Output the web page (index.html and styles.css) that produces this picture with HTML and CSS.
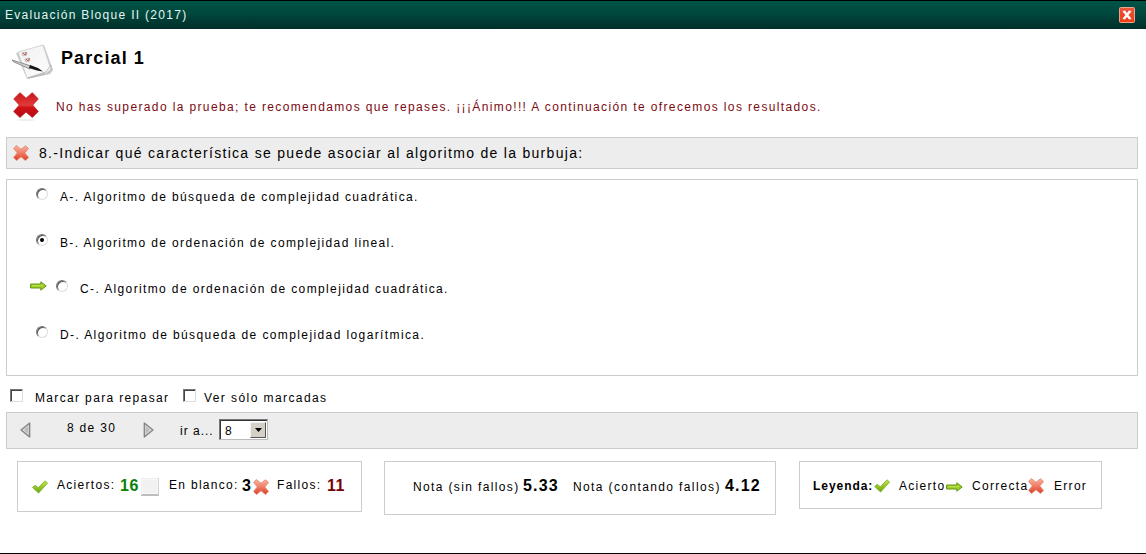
FILE: index.html
```html
<!DOCTYPE html>
<html lang="es">
<head>
<meta charset="utf-8">
<title>Evaluación Bloque II (2017)</title>
<link rel="stylesheet" href="styles.css">
</head>
<body>
<svg class="defs" width="0" height="0" aria-hidden="true">
  <defs>
    <linearGradient id="gGreen" x1="0" y1="0" x2="0" y2="1"><stop offset="0" stop-color="#c3e83c"/><stop offset="1" stop-color="#67a611"/></linearGradient>
    <linearGradient id="gRed" x1="0" y1="0" x2="0" y2="1"><stop offset="0" stop-color="#f8b3a2"/><stop offset=".45" stop-color="#f0836c"/><stop offset="1" stop-color="#dc3d24"/></linearGradient>
    <linearGradient id="gDeep" x1="0" y1="0" x2="0" y2="1"><stop offset="0" stop-color="#c9141b"/><stop offset=".5" stop-color="#e23a3a"/><stop offset=".6" stop-color="#cf1218"/><stop offset="1" stop-color="#b30b12"/></linearGradient>
    <linearGradient id="gClose" x1="0" y1="0" x2="0" y2="1"><stop offset="0" stop-color="#e8553c"/><stop offset="1" stop-color="#f03c14"/></linearGradient>
    <linearGradient id="gGray" x1="0" y1="0" x2="1" y2="0"><stop offset="0" stop-color="#d8d8d8"/><stop offset="1" stop-color="#aaa"/></linearGradient>
    <linearGradient id="gPaper" x1="0" y1="0" x2="1" y2="1"><stop offset="0" stop-color="#f1f1f1"/><stop offset="1" stop-color="#fdfdfd"/></linearGradient>
    <symbol id="cross" viewBox="0 0 16 16"><path d="M3.2 .5 8 4.200 12.6 .7 15.6 3.6 11.8 7.9 15.6 12.4 12.4 15.5 8 11.8 3.6 15.5 .5 12.4 4.300 7.900 .6 3.6Z" fill="url(#gRed)" stroke="#e4876f" stroke-width=".8"/></symbol>
    <symbol id="check" viewBox="0 0 16 14"><path d="M.6 7.6 3 5.2 6.3 7.700 13 .8 15.600 3 6.600 13.100Z" fill="url(#gGreen)" stroke="#7cae2a" stroke-width=".8"/></symbol>
    <symbol id="arrow" viewBox="0 0 17 10"><path d="M.6 3h10.2V.8L16.2 5l-5.4 4.2V7H.6Z" fill="#9bcf20" stroke="#669317" stroke-width="1"/><path d="M2 4.7h11" stroke="#c5e868" stroke-width=".8"/></symbol>
    <symbol id="prev" viewBox="0 0 11 16"><path d="M9.7 1v14L1 8Z" fill="url(#gGray)" stroke="#858585" stroke-width="1.3" stroke-linejoin="round"/><path d="M8.4 3.6v8.8L3 8Z" fill="none" stroke="#dedede" stroke-width=".8"/></symbol>
  </defs>
</svg>
<div class="window">
  <header class="titlebar">
    <span class="caption">Evaluación Bloque II (2017)</span>
    <svg class="close" viewBox="0 0 16 16"><rect x=".5" y=".5" width="15" height="15" rx="1" fill="url(#gClose)" stroke="#e9a58f"/><path d="M5 4.2 11 11.8M11 4.2 5 11.8" stroke="#fff" stroke-width="2.4"/><path d="M3.7 4.3h2.6M9.7 4.3h2.6M3.7 11.7h2.6M9.7 11.7h2.6" stroke="#fff" stroke-width="1"/></svg>
  </header>
  <main>
    <div class="heading">
      <svg class="paper" viewBox="0 0 42 36"><path d="M5 9 33 1l9 25-3 4-23 5Z" fill="#c9c9c9"/><path d="M7 8 32 1l8 25-24 8Z" fill="url(#gPaper)" stroke="#ccc" stroke-width=".8"/><path d="m34 29 6-8v5l-5 4-18 4Z" fill="#eee" stroke="#aaa" stroke-width=".7"/><path d="m11 9 4-1 1 3-4 1ZM14 15l4-1 1 3-4 1Z" fill="#f6dcdc" stroke="#aaa" stroke-width=".7"/><path d="m12 9 2 2 1.500-3M15 15l2 2 1.500-3" fill="none" stroke="#bf444c" stroke-width=".9"/><path d="m1 16 19 6-1 3L3 18Z" fill="#d6d6d6" stroke="#777" stroke-width=".8"/><path d="m19 21 8 3 5 3.500-6-1-8-2.500Z" fill="#151515"/></svg>
      <h1>Parcial 1</h1>
    </div>
    <div class="message">
      <svg class="fail" viewBox="0 0 26 30"><ellipse cx="13" cy="28" rx="9" ry="1" fill="#eee"/><path d="M7 .7 13 6.200 19.300 .7l6 6.200-5.600 6.200 5.600 6.400-6 6L13 20 7 25.500.7 19.500l5.600-6.400-5.600-6.200Z" fill="url(#gDeep)" stroke="#bf1d22" stroke-width=".8"/></svg>
      <p>No has superado la prueba; te recomendamos que repases. ¡¡¡Ánimo!!! A continuación te ofrecemos los resultados.</p>
    </div>
    <div class="question">
      <svg class="i-cross"><use href="#cross"/></svg>
      <span>8.-Indicar qué característica se puede asociar al algoritmo de la burbuja:</span>
    </div>
    <ul class="answers">
      <li><i class="radio"></i><span class="a">A-. Algoritmo de búsqueda de complejidad cuadrática.</span></li>
      <li><i class="radio on"></i><span class="b">B-. Algoritmo de ordenación de complejidad lineal.</span></li>
      <li class="right"><svg class="i-arrow"><use href="#arrow"/></svg><i class="radio"></i><span class="c">C-. Algoritmo de ordenación de complejidad cuadrática.</span></li>
      <li><i class="radio"></i><span class="d">D-. Algoritmo de búsqueda de complejidad logarítmica.</span></li>
    </ul>
    <div class="marks">
      <i class="box"></i><span class="m1">Marcar para repasar</span>
      <i class="box"></i><span class="m2">Ver sólo marcadas</span>
    </div>
    <nav class="pager">
      <svg class="i-nav"><use href="#prev"/></svg>
      <span class="count">8 de 30</span>
      <svg class="i-nav flip"><use href="#prev"/></svg>
      <span class="goto">ir a...</span>
      <div class="select"><span>8</span><b><svg viewBox="0 0 7 4"><path d="M0 0h7L3.500 4Z"/></svg></b></div>
    </nav>
    <div class="summary">
      <section class="panel totals">
        <svg class="i-check"><use href="#check"/></svg><span class="t1">Aciertos:</span><strong class="n1 good">16</strong>
        <i class="blank"></i><span class="t2">En blanco:</span><strong class="n2">3</strong>
        <svg class="i-cross"><use href="#cross"/></svg><span class="t3">Fallos:</span><strong class="n3 bad">11</strong>
      </section>
      <section class="panel grades">
        <span class="g1">Nota (sin fallos)</span><strong class="v1">5.33</strong>
        <span class="g2">Nota (contando fallos)</span><strong class="v2">4.12</strong>
      </section>
      <section class="panel legend">
        <b class="l0">Leyenda:</b><svg class="i-check"><use href="#check"/></svg><span class="l1">Acierto</span>
        <svg class="i-arrow"><use href="#arrow"/></svg><span class="l2">Correcta</span>
        <svg class="i-cross"><use href="#cross"/></svg><span class="l3">Error</span>
      </section>
    </div>
  </main>
</div>
</body>
</html>
```
FILE: styles.css
```css
* { box-sizing: border-box; }
body { margin: 0; background: #fff; color: #000; font: 12px/16px "Liberation Sans", Arial, sans-serif; letter-spacing: 1.3px; white-space: nowrap; }
h1, p, ul { margin: 0; padding: 0; }
svg, i { display: block; flex: none; }
.defs { position: absolute; }
.window { height: 554px; border-bottom: 1px solid #000; overflow: hidden; }
.titlebar { height: 29px; border-top: 1px solid #000; background: linear-gradient(#005447, #00493f 40%, #002e29); color: #e6f5f0; display: flex; justify-content: space-between; padding: 6px 11px 0 5px; }
.close { width: 16px; height: 16px; }
main { padding: 0 8px 0 6px; }
.heading { height: 53px; display: flex; padding: 15px 0 0 5px; gap: 8px; }
.paper { width: 42px; height: 36px; }
h1 { font-size: 18px; line-height: 20px; padding-top: 4px; letter-spacing: 1.1px; }
.message { height: 55px; display: flex; padding: 10px 0 0 7px; gap: 17px; color: #7c0a12; }
.fail { width: 26px; height: 30px; }
.message p { padding-top: 7px; letter-spacing: 1.37px; }
.question { height: 32px; border: 1px solid #ccc; background: #ededed; display: flex; align-items: center; padding-left: 6px; gap: 10px; font-size: 14px; letter-spacing: 1.3px; }
.i-cross { width: 16px; height: 16px; }
.i-check { width: 16px; height: 14px; }
.i-arrow { width: 17px; height: 10px; }
.answers { list-style: none; height: 197px; margin-top: 10px; border: 1px solid #ccc; padding: 8px 0 0 29px; }
.answers li { height: 46px; display: flex; }
.answers li span { margin: 1px 0 0 12px; letter-spacing: 1.37px; }
.answers li .d { letter-spacing: 1.39px; }
.answers .right { padding-left: 0; margin-left: -7px; }
.right .i-arrow { margin: 1px 9px 0 1px; }
.radio { width: 12px; height: 12px; border-radius: 50%; border: 1px solid; border-color: #777 #ddd #ddd #777; box-shadow: inset 1px 1px 0 #555; display: grid; place-items: center; }
.radio.on::after { content: ""; width: 4px; height: 4px; border-radius: 50%; background: #000; }
.marks { height: 36px; display: flex; padding: 13px 0 0 4px; }
.box { width: 13px; height: 13px; border: 1px solid; border-color: #777 #ddd #ddd #777; box-shadow: inset 1px 1px 0 #444; background: #fff; }
.m1 { margin: 1px 0 0 12px; width: 148px; letter-spacing: 1.35px; }
.m2 { margin: 1px 0 0 8px; letter-spacing: 1.42px; }
.pager { height: 37px; border: 1px solid #ccc; background: #ededed; display: flex; padding: 6px 0 0 13px; }
.i-nav { width: 11px; height: 16px; margin-top: 3px; }
.flip { transform: scaleX(-1); }
.count { margin: 1px 0 0 36px; width: 76px; }
.goto { margin: 4px 0 0 26px; width: 39px; letter-spacing: 1px; }
.select { width: 49px; height: 21px; border: 1px solid; border-color: #777 #bbb #bbb #777; box-shadow: inset 1px 1px 0 #333; background: #fff; display: flex; justify-content: space-between; padding: 2px 1px 1px 5px; }
.select span { padding-top: 1px; }
.select b { width: 16px; background: #d4d0c8; border: 1px solid; border-color: #f4f2ee #555 #555 #f4f2ee; display: grid; place-items: center; }
.select b svg { width: 7px; height: 4px; }
.summary { display: flex; align-items: flex-start; padding: 12px 0 0 11px; gap: 22px; }
.panel { border: 1px solid #ccc; display: flex; align-items: flex-start; }
.panel strong { font-size: 16px; letter-spacing: .5px; }
.totals { width: 345px; height: 51px; padding: 15px 0 0 14px; }
.totals strong, .blank { margin-top: 1px; }
.totals .i-cross { margin-top: 2px; }
.totals .i-check { margin-top: 3px; }
.t1 { margin-left: 9px; width: 63px; }
.n1 { width: 21px; }
.blank { width: 18px; height: 18px; border: 1px solid; border-color: #eee #d2d2d2 #bcbcbc #eee; border-bottom-width: 2px; background: #f1f1f1; box-shadow: inset 0 0 0 1px #f7f7f7; }
.t2 { margin-left: 10px; width: 73px; }
.n2 { width: 11px; }
.t3 { margin-left: 8px; width: 50px; }
.grades { width: 392px; height: 54px; padding: 17px 0 0 28px; }
.grades strong { margin-top: -1px; letter-spacing: 1.2px; }
.g1 { width: 110px; letter-spacing: 1.36px; }
.v1 { width: 50px; }
.g2 { width: 152px; letter-spacing: 1.38px; }
.legend { width: 303px; height: 48px; padding: 16px 0 0 13px; margin-left: 1px; }
.l0 { width: 61px; letter-spacing: .95px; }
.l1 { margin-left: 9px; width: 47px; }
.legend .i-arrow { margin-top: 4px; }
.legend .i-check { margin-top: 1px; }
.l2 { margin-left: 9px; width: 56px; }
.l3 { margin-left: 10px; }
.good { color: #078307; }
.bad { color: #750008; }
```
